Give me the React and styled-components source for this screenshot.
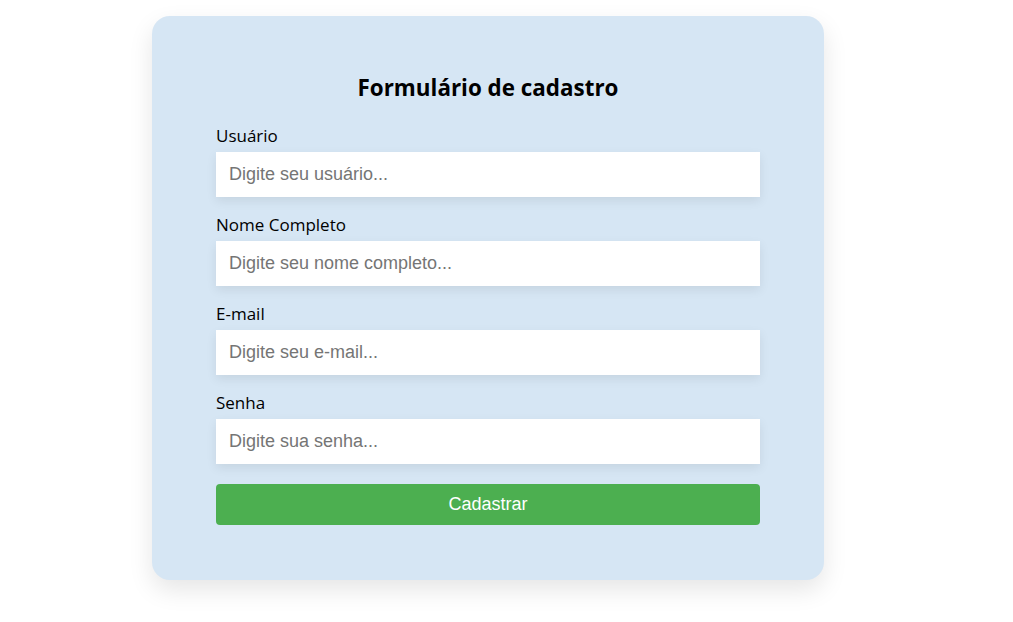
import React from 'react';
import styled, { createGlobalStyle } from 'styled-components';

// 기본 스타일
const GlobalStyle = createGlobalStyle`
  body {
    margin: 0;
    background: #ffffff;
    font-family: "Open Sans", "Noto Sans", sans-serif;
  }
`;

const fields = [
  { id: 'usuario', label: 'Usuário', placeholder: 'Digite seu usuário...', type: 'text' },
  { id: 'nome', label: 'Nome Completo', placeholder: 'Digite seu nome completo...', type: 'text' },
  { id: 'email', label: 'E-mail', placeholder: 'Digite seu e-mail...', type: 'email' },
  { id: 'senha', label: 'Senha', placeholder: 'Digite sua senha...', type: 'password' }
];

function App() {
  return (
    <Page>
      <GlobalStyle />
      <Card>
        <Title>Formulário de cadastro</Title>
        <Form onSubmit={(e) => e.preventDefault()}>
          {fields.map((f) => (
            <Field key={f.id}>
              <Label htmlFor={f.id}>{f.label}</Label>
              <Input id={f.id} type={f.type} placeholder={f.placeholder} />
            </Field>
          ))}
          <Button type="submit">Cadastrar</Button>
        </Form>
      </Card>
    </Page>
  );
}

const Page = styled.div`
  padding: 16px 0 40px 152px;
`;

const Card = styled.div`
  width: 672px;
  box-sizing: border-box;
  padding: 57px 64px 55px;
  background: #d6e6f4;
  border-radius: 18px;
  box-shadow: 0 10px 24px rgba(0, 0, 0, 0.1);
`;

const Title = styled.h2`
  margin: 0 0 22px;
  text-align: center;
  font-size: 22.4px;
  font-weight: 700;
  color: #000000;
  line-height: 30px;
`;

const Form = styled.form`
  display: flex;
  flex-direction: column;
`;

const Field = styled.div`
  display: flex;
  flex-direction: column;
  margin-bottom: 17px;
`;

const Label = styled.label`
  font-size: 17px;
  line-height: 22px;
  color: #000000;
  margin-bottom: 5px;
`;

const Input = styled.input`
  height: 45px;
  box-sizing: border-box;
  border: none;
  outline: none;
  padding: 0 13px;
  background: #ffffff;
  font-family: "Liberation Sans", Arial, sans-serif;
  font-size: 18px;
  color: #000000;
  box-shadow: 0 4px 10px rgba(0, 0, 0, 0.08);

  &::placeholder {
    color: #757575;
  }
`;

const Button = styled.button`
  height: 41px;
  margin-top: 3px;
  border: none;
  border-radius: 4px;
  background: #4caf50;
  color: #ffffff;
  font-family: "Liberation Sans", Arial, sans-serif;
  font-size: 18px;
  cursor: pointer;
`;

export default App;
